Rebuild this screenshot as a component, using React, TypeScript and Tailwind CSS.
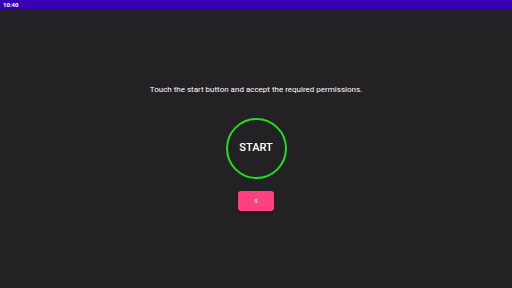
import React from 'react'

export default function App() {
  return (
    <div className="flex flex-col w-[512px] h-[288px] bg-[#232123] text-white font-['Roboto',sans-serif] overflow-hidden">
      {/* Status bar */}
      <div className="flex items-center h-[9px] px-[3px] bg-[#3700b3]">
        <span className="text-[6px] leading-none font-bold text-white">10:40</span>
      </div>

      {/* Content */}
      <div className="flex flex-col items-center pt-[76px]">
        <p className="text-[8px] leading-[10px] text-white">
          Touch the start button and accept the required permissions.
        </p>
        <button className="mt-[23px] w-[61px] h-[61px] rounded-full border-2 border-[#1ee01e] flex items-center justify-center">
          <span className="text-[11px] font-medium">START</span>
        </button>
        <button className="mt-[12px] w-[36px] h-[20px] rounded-[3px] bg-[#ff4081] shadow-[0_1px_2px_rgba(0,0,0,0.6)] flex items-center justify-center">
          <span className="text-[5px] leading-none font-bold text-white">5</span>
        </button>
      </div>
    </div>
  )
}
